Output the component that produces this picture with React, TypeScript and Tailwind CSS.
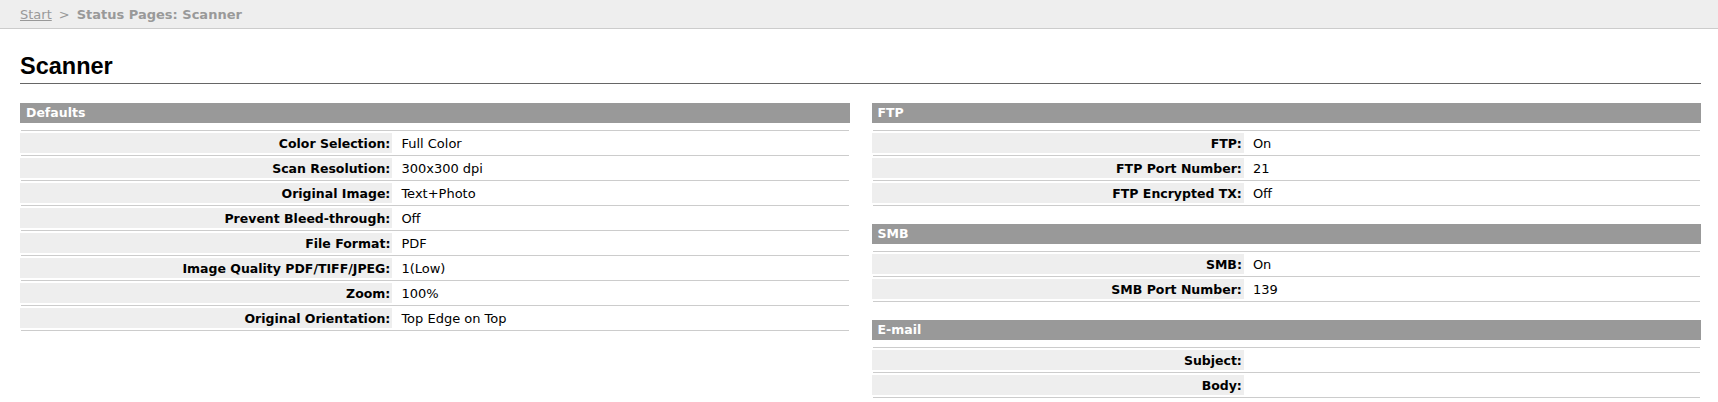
import React from "react";

type Row = [string, string];

const defaults: Row[] = [
  ["Color Selection:", "Full Color"],
  ["Scan Resolution:", "300x300 dpi"],
  ["Original Image:", "Text+Photo"],
  ["Prevent Bleed-through:", "Off"],
  ["File Format:", "PDF"],
  ["Image Quality PDF/TIFF/JPEG:", "1(Low)"],
  ["Zoom:", "100%"],
  ["Original Orientation:", "Top Edge on Top"],
];

const ftp: Row[] = [
  ["FTP:", "On"],
  ["FTP Port Number:", "21"],
  ["FTP Encrypted TX:", "Off"],
];

const smb: Row[] = [
  ["SMB:", "On"],
  ["SMB Port Number:", "139"],
];

const email: Row[] = [
  ["Subject:", ""],
  ["Body:", ""],
];

function Section({ title, rows }: { title: string; rows: Row[] }) {
  return (
    <div className="mb-[18px]">
      <div className="h-[20px] bg-[#999999] pl-[6px] text-[12.5px] font-bold leading-[20px] text-white">
        {title}
      </div>
      <div className="mx-[1px] mt-[7px] border-t border-[#cccccc]">
        {rows.map(([label, value]) => (
          <div key={label} className="flex border-b border-[#cccccc] py-[2px]">
            <div className="-ml-[1px] h-[20px] w-[45%] whitespace-nowrap bg-[#eeeeee] pr-[2px] pt-[1px] text-right text-[12.5px] font-bold leading-[19px] text-black">
              {label}
            </div>
            <div className="h-[20px] whitespace-nowrap pl-[9px] pt-[1px] text-[13px] leading-[19px] text-black">{value}</div>
          </div>
        ))}
      </div>
    </div>
  );
}

export default function App() {
  return (
    <div className="min-h-[402px] w-full bg-white" style={{ fontFamily: '"DejaVu Sans", Verdana, sans-serif' }}>
      <div className="flex h-[29px] items-center border-b border-[#cccccc] bg-[#eeeeee] pl-[20px] pt-[1px] text-[13px] text-[#999999]">
        <a className="underline">Start</a>
        <span className="mx-[7px]">&gt;</span>
        <span className="font-bold">Status Pages: Scanner</span>
      </div>
      <div className="pl-[20px] pr-[17px]">
        <h1
          className="mt-[25px] border-b border-[#666666] pb-[4px] text-[23.5px] font-bold leading-[25px] text-black"
          style={{ fontFamily: '"Liberation Sans", Arial, sans-serif' }}
        >
          Scanner
        </h1>
        <div className="mt-[19px] grid grid-cols-2 gap-x-[22px]">
          <div>
            <Section title="Defaults" rows={defaults} />
          </div>
          <div>
            <Section title="FTP" rows={ftp} />
            <Section title="SMB" rows={smb} />
            <Section title="E-mail" rows={email} />
          </div>
        </div>
      </div>
    </div>
  );
}
